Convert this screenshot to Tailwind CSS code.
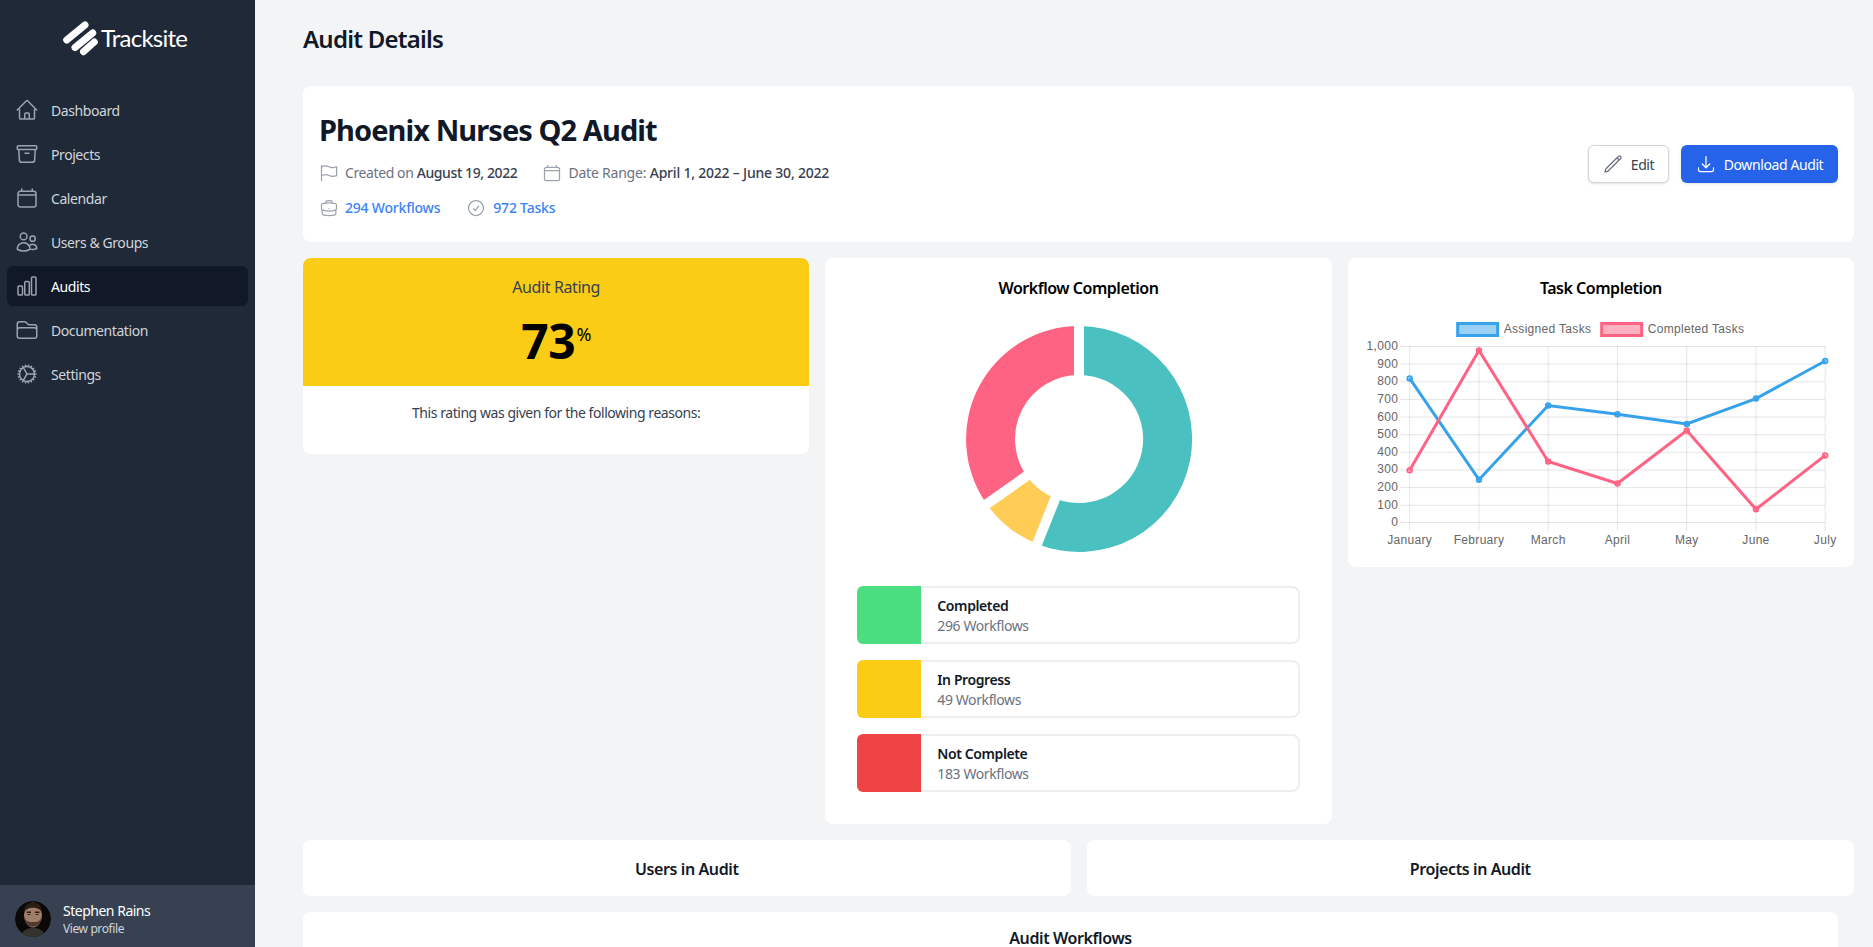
<!DOCTYPE html>
<html lang="en">
<head>
  <meta charset="UTF-8">
  <title>Audit Details</title>
  <script src="https://cdn.jsdelivr.net/npm/@tailwindcss/browser@4"></script>
</head>
<body class="h-screen overflow-hidden bg-[#f3f4f6] font-['Noto_Sans',sans-serif] tracking-[-0.025em]">
<div class="flex h-[947px]">

  <!-- sidebar -->
  <aside class="w-[255px] shrink-0 bg-[#1f2937] flex flex-col">
    <div class="h-[90px] flex items-start pl-[60px] pt-[18px]">
      <svg class="w-10 h-10" viewBox="60 18 40 40" fill="none" stroke="#fff" stroke-width="7" stroke-linecap="round">
        <path d="M66.7 40 L85 25"/>
        <path d="M75 47.5 L92.7 33"/>
        <path d="M83.5 51.7 L94.3 42"/>
      </svg>
      <span class="ml-[1px] mt-[5px] text-[24px] leading-[30px] text-white font-['Lato',sans-serif] tracking-[-0.032em]">Tracksite</span>
    </div>
    <nav class="flex flex-col gap-1 mx-[7px] flex-1 text-sm tracking-[-0.03em]">
      <a class="flex items-center h-10 px-2 rounded-md text-[#d1d5db]">
        <svg class="w-6 h-6 mr-3 text-[#9ca3af]" fill="none" viewBox="0 0 24 24" stroke="currentColor" stroke-width="1.5"><path stroke-linecap="round" stroke-linejoin="round" d="M2.25 12l8.954-8.955c.44-.439 1.152-.439 1.591 0L21.75 12M4.5 9.75v10.125c0 .621.504 1.125 1.125 1.125H9.75v-4.875c0-.621.504-1.125 1.125-1.125h2.25c.621 0 1.125.504 1.125 1.125V21h4.125c.621 0 1.125-.504 1.125-1.125V9.75M8.25 21h8.25"/></svg>
        <span class="mt-[2px]">Dashboard</span>
      </a>
      <a class="flex items-center h-10 px-2 rounded-md text-[#d1d5db]">
        <svg class="w-6 h-6 mr-3 text-[#9ca3af]" fill="none" viewBox="0 0 24 24" stroke="currentColor" stroke-width="1.5"><path stroke-linecap="round" stroke-linejoin="round" d="M20.25 7.5l-.625 10.632a2.25 2.25 0 01-2.247 2.118H6.622a2.25 2.25 0 01-2.247-2.118L3.75 7.5M10 11.25h4M3.375 7.5h17.25c.621 0 1.125-.504 1.125-1.125v-1.5c0-.621-.504-1.125-1.125-1.125H3.375c-.621 0-1.125.504-1.125 1.125v1.5c0 .621.504 1.125 1.125 1.125z"/></svg>
        <span class="mt-[2px]">Projects</span>
      </a>
      <a class="flex items-center h-10 px-2 rounded-md text-[#d1d5db]">
        <svg class="w-6 h-6 mr-3 text-[#9ca3af]" fill="none" viewBox="0 0 24 24" stroke="currentColor" stroke-width="1.5"><path stroke-linecap="round" stroke-linejoin="round" d="M6.75 3v2.25M17.25 3v2.25M3 18.75V7.5a2.25 2.25 0 012.25-2.25h13.5A2.25 2.25 0 0121 7.5v11.25m-18 0A2.25 2.25 0 005.25 21h13.5A2.25 2.25 0 0021 18.75m-18 0V9h18"/></svg>
        <span class="mt-[2px]">Calendar</span>
      </a>
      <a class="flex items-center h-10 px-2 rounded-md text-[#d1d5db]">
        <svg class="w-6 h-6 mr-3 text-[#9ca3af]" fill="none" viewBox="0 0 24 24" stroke="currentColor" stroke-width="1.5"><path stroke-linecap="round" stroke-linejoin="round" d="M15 19.128a9.38 9.38 0 002.625.372 9.337 9.337 0 004.121-.952 4.125 4.125 0 00-7.533-2.493M15 19.128v-.003c0-1.113-.285-2.16-.786-3.07M15 19.128v.106A12.318 12.318 0 018.624 21c-2.331 0-4.512-.645-6.374-1.766l-.001-.109a6.375 6.375 0 0111.964-3.07M12 6.375a3.375 3.375 0 11-6.75 0 3.375 3.375 0 016.75 0zm8.25 2.25a2.625 2.625 0 11-5.25 0 2.625 2.625 0 015.25 0z"/></svg>
        <span class="mt-[2px]">Users &amp; Groups</span>
      </a>
      <a class="flex items-center h-10 px-2 rounded-md text-white bg-[#111827]">
        <svg class="w-6 h-6 mr-3 text-[#9ca3af]" fill="none" viewBox="0 0 24 24" stroke="currentColor" stroke-width="1.5"><path stroke-linecap="round" stroke-linejoin="round" d="M3 13.125C3 12.504 3.504 12 4.125 12h2.25c.621 0 1.125.504 1.125 1.125v6.75C7.5 20.496 6.996 21 6.375 21h-2.25A1.125 1.125 0 013 19.875v-6.75zM9.75 8.625c0-.621.504-1.125 1.125-1.125h2.25c.621 0 1.125.504 1.125 1.125v11.25c0 .621-.504 1.125-1.125 1.125h-2.25a1.125 1.125 0 01-1.125-1.125V8.625zM16.5 4.125c0-.621.504-1.125 1.125-1.125h2.25C20.496 3 21 3.504 21 4.125v15.75c0 .621-.504 1.125-1.125 1.125h-2.25a1.125 1.125 0 01-1.125-1.125V4.125z"/></svg>
        <span class="mt-[2px]">Audits</span>
      </a>
      <a class="flex items-center h-10 px-2 rounded-md text-[#d1d5db]">
        <svg class="w-6 h-6 mr-3 text-[#9ca3af]" fill="none" viewBox="0 0 24 24" stroke="currentColor" stroke-width="1.5"><path stroke-linecap="round" stroke-linejoin="round" d="M2.25 12.75V12A2.25 2.25 0 014.5 9.75h15A2.25 2.25 0 0121.75 12v.75m-8.69-6.44l-2.12-2.12a1.5 1.5 0 00-1.061-.44H4.5A2.25 2.25 0 002.25 6v12a2.25 2.25 0 002.25 2.25h15A2.25 2.25 0 0021.75 18V9a2.25 2.25 0 00-2.25-2.25h-5.379a1.5 1.5 0 01-1.06-.44z"/></svg>
        <span class="mt-[2px]">Documentation</span>
      </a>
      <a class="flex items-center h-10 px-2 rounded-md text-[#d1d5db]">
        <svg class="w-6 h-6 mr-3 text-[#9ca3af]" fill="none" viewBox="0 0 24 24" stroke="currentColor" stroke-width="1.5"><path stroke-linecap="round" stroke-linejoin="round" d="M4.5 12a7.5 7.5 0 0015 0m-15 0a7.5 7.5 0 1115 0m-15 0H3m16.5 0H21m-1.5 0H12m-8.457 3.077l1.41-.513m14.095-5.13l1.41-.513M5.106 17.785l1.15-.964m11.49-9.642l1.149-.964M7.501 19.795l.75-1.3m7.5-12.99l.75-1.3m-6.063 16.658l.26-1.477m2.605-14.772l.26-1.477m0 17.726l-.26-1.477M10.698 4.614l-.26-1.477M16.5 19.794l-.75-1.299M7.5 4.205L12 12m6.894 5.785l-1.149-.964M6.256 7.178l-1.15-.964m15.352 8.864l-1.41-.513M4.954 9.435l-1.41-.514M12.002 12l-3.75 6.495"/></svg>
        <span class="mt-[2px]">Settings</span>
      </a>
    </nav>
    <div class="h-[62px] bg-[#374151] flex items-center pl-[15px] pt-[6px] gap-3">
      <svg class="w-9 h-9 rounded-full" viewBox="0 0 36 36">
        <circle cx="18" cy="18" r="18" fill="#0a0908"/>
        <path d="M6 36 C7 29 12 27 18 27 C24 27 29 29 30 36 Z" fill="#34322c"/>
        <ellipse cx="18" cy="14" rx="9" ry="12.5" fill="#a07e68"/>
        <path d="M9 12 C8 -2 28 -2 27 12 C25 5 11 5 9 12 Z" fill="#2c1d14"/>
        <path d="M9.5 16 C10 29 26 29 26.5 16 C25 21 22 21 18 21 C14 21 11 21 9.5 16 Z" fill="#4f3a2d"/>
        <rect x="11.5" y="10.5" width="4.5" height="1.5" fill="#2c1d14"/>
        <rect x="20" y="10.5" width="4.5" height="1.5" fill="#2c1d14"/>
        <rect x="12.5" y="13" width="3" height="1" fill="#3a2a20"/>
        <rect x="20.5" y="13" width="3" height="1" fill="#3a2a20"/>
      </svg>
      <div>
        <p class="text-sm leading-5 text-white tracking-[-0.035em]">Stephen Rains</p>
        <p class="text-xs leading-4 text-[#d1d5db]">View profile</p>
      </div>
    </div>
  </aside>

  <!-- main -->
  <main class="flex-1 pl-[48px] pr-[19px] min-w-0">
    <h1 class="h-[86px] pt-[24px] text-2xl leading-[30px] font-semibold text-[#111827] tracking-[-0.032em]">Audit Details</h1>

    <section class="h-[156px] bg-white rounded-lg p-4 flex items-center justify-between">
      <div class="pt-[2px]">
        <h2 class="text-[29px] leading-9 font-bold text-[#111827] tracking-[-0.032em]">Phoenix Nurses Q2 Audit</h2>
        <div class="mt-[15px] flex items-center gap-[25px] text-sm text-[#6b7280]">
          <span class="flex items-center">
            <svg class="w-5 h-5 mr-[6px] text-[#9ca3af]" fill="none" viewBox="0 0 24 24" stroke="currentColor" stroke-width="1.5"><path stroke-linecap="round" stroke-linejoin="round" d="M3 3v1.5M3 21v-6m0 0l2.77-.693a9 9 0 016.208.682l.108.054a9 9 0 006.086.71l3.114-.732a48.524 48.524 0 01-.005-10.499l-3.11.732a9 9 0 01-6.085-.711l-.108-.054a9 9 0 00-6.208-.682L3 4.5M3 15V4.5"/></svg>
            Created on&nbsp;<span class="font-medium text-[#374151]">August 19, 2022</span>
          </span>
          <span class="flex items-center tracking-[-0.015em]">
            <svg class="w-5 h-5 mr-[6px] text-[#9ca3af]" fill="none" viewBox="0 0 24 24" stroke="currentColor" stroke-width="1.5"><path stroke-linecap="round" stroke-linejoin="round" d="M6.75 3v2.25M17.25 3v2.25M3 18.75V7.5a2.25 2.25 0 012.25-2.25h13.5A2.25 2.25 0 0121 7.5v11.25m-18 0A2.25 2.25 0 005.25 21h13.5A2.25 2.25 0 0021 18.75m-18 0V9h18"/></svg>
            Date Range:&nbsp;<span class="font-medium text-[#374151]">April 1, 2022 – June 30, 2022</span>
          </span>
        </div>
        <div class="mt-[15px] flex items-center gap-[26px] text-sm font-medium text-[#3b82f6] tracking-[-0.015em]">
          <a class="flex items-center">
            <svg class="w-5 h-5 mr-[6px] text-[#9ca3af]" fill="none" viewBox="0 0 24 24" stroke="currentColor" stroke-width="1.5"><path stroke-linecap="round" stroke-linejoin="round" d="M20.25 14.15v4.25c0 1.094-.787 2.036-1.872 2.18-2.087.277-4.216.42-6.378.42s-4.291-.143-6.378-.42c-1.085-.144-1.872-1.086-1.872-2.18v-4.25m16.5 0a2.18 2.18 0 00.75-1.661V8.706c0-1.081-.768-2.015-1.837-2.175a48.114 48.114 0 00-3.413-.387m4.5 8.006c-.194.165-.42.295-.673.38A23.978 23.978 0 0112 15.75c-2.648 0-5.195-.429-7.577-1.22a2.016 2.016 0 01-.673-.38m0 0A2.18 2.18 0 013 12.489V8.706c0-1.081.768-2.015 1.837-2.175a48.111 48.111 0 013.413-.387m7.5 0V5.25A2.25 2.25 0 0013.5 3h-3a2.25 2.25 0 00-2.25 2.25v.894m7.5 0a48.667 48.667 0 00-7.5 0M12 12.75h.008v.008H12v-.008z"/></svg>
            294 Workflows
          </a>
          <a class="flex items-center">
            <svg class="w-5 h-5 mr-[7px] text-[#9ca3af]" fill="none" viewBox="0 0 24 24" stroke="currentColor" stroke-width="1.5"><path stroke-linecap="round" stroke-linejoin="round" d="M9 12.75L11.25 15 15 9.75M21 12a9 9 0 11-18 0 9 9 0 0118 0z"/></svg>
            972 Tasks
          </a>
        </div>
      </div>
      <div class="flex items-center gap-3">
        <button class="h-[38px] w-[81px] flex items-center justify-center rounded-md border border-[#d1d5db] bg-white text-sm text-[#374151] shadow-sm">
          <svg class="w-5 h-5 mr-2 text-[#6b7280]" fill="none" viewBox="0 0 24 24" stroke="currentColor" stroke-width="1.5"><path stroke-linecap="round" stroke-linejoin="round" d="M16.862 4.487l1.687-1.688a1.875 1.875 0 112.652 2.652L6.832 19.82a4.5 4.5 0 01-1.897 1.13l-2.685.8.8-2.685a4.5 4.5 0 011.13-1.897L16.863 4.487zm0 0L19.5 7.125"/></svg>
          <span class="mt-[2px]">Edit</span>
        </button>
        <button class="h-[38px] w-[157px] flex items-center justify-center rounded-md bg-[#2563eb] text-sm text-white shadow-sm">
          <svg class="w-5 h-5 mr-2" fill="none" viewBox="0 0 24 24" stroke="currentColor" stroke-width="1.5"><path stroke-linecap="round" stroke-linejoin="round" d="M3 16.5v2.25A2.25 2.25 0 005.25 21h13.5A2.25 2.25 0 0021 18.75V16.5M16.5 12L12 16.5m0 0L7.5 12m4.5 4.5V3"/></svg>
          <span class="mt-[2px]">Download Audit</span>
        </button>
      </div>
    </section>

    <div class="mt-4 grid grid-cols-3 gap-4 items-start">
      <!-- rating -->
      <section class="bg-white rounded-lg overflow-hidden h-[196px]">
        <div class="h-[128px] bg-[#facc15] pt-[17px] text-center">
          <p class="text-base leading-6 text-[#374151]">Audit Rating</p>
          <p class="mt-[16px] text-[48px] leading-[52px] font-bold text-black">73<span class="ml-[1px] align-[18px] text-[18px] leading-none font-normal">%</span></p>
        </div>
        <p class="pt-[17px] text-center text-sm leading-5 text-[#374151] tracking-[-0.032em]">This rating was given for the following reasons:</p>
      </section>

      <!-- workflow completion -->
      <section class="bg-white rounded-lg h-[566px] pt-[20px] px-8">
        <h3 class="text-center text-base leading-5 font-semibold text-black tracking-[-0.03em]">Workflow Completion</h3>
        <svg class="mx-auto mt-[28px] w-[226px] h-[226px] overflow-visible" viewBox="-114 -113 226 226">
          <path d="M0 -113 A113 113 0 1 1 -41.9 104.9 L-23.7 59.4 A64 64 0 1 0 0 -64 Z" fill="#4bc0c0"/>
          <path d="M-41.9 104.9 A113 113 0 0 1 -92.3 65.1 L-52.3 36.9 A64 64 0 0 0 -23.7 59.4 Z" fill="#ffcd56"/>
          <path d="M-92.3 65.1 A113 113 0 0 1 0 -113 L0 -64 A64 64 0 0 0 -52.3 36.9 Z" fill="#ff6384"/>
          <g stroke="#fff" stroke-width="10">
            <path d="M0 -120 L0 -58"/>
            <path d="M-44.5 111.4 L-21.5 53.9"/>
            <path d="M-98 69.2 L-47.4 33.4"/>
          </g>
        </svg>
        <div class="mt-[34px] flex flex-col gap-4">
          <div class="h-[58px] flex">
            <div class="w-16 rounded-l-md bg-[#4ade80]"></div>
            <div class="flex-1 pl-4 flex flex-col justify-center pt-[2px] rounded-r-lg border-2 border-l-0 border-[#eceef1]">
              <p class="text-sm leading-5 font-semibold text-[#111827]">Completed</p>
              <p class="text-sm leading-5 text-[#6b7280]">296 Workflows</p>
            </div>
          </div>
          <div class="h-[58px] flex">
            <div class="w-16 rounded-l-md bg-[#facc15]"></div>
            <div class="flex-1 pl-4 flex flex-col justify-center pt-[2px] rounded-r-lg border-2 border-l-0 border-[#eceef1]">
              <p class="text-sm leading-5 font-semibold text-[#111827]">In Progress</p>
              <p class="text-sm leading-5 text-[#6b7280]">49 Workflows</p>
            </div>
          </div>
          <div class="h-[58px] flex">
            <div class="w-16 rounded-l-md bg-[#ef4444]"></div>
            <div class="flex-1 pl-4 flex flex-col justify-center pt-[2px] rounded-r-lg border-2 border-l-0 border-[#eceef1]">
              <p class="text-sm leading-5 font-semibold text-[#111827]">Not Complete</p>
              <p class="text-sm leading-5 text-[#6b7280]">183 Workflows</p>
            </div>
          </div>
        </div>
      </section>

      <!-- task completion -->
      <section class="bg-white rounded-lg h-[309px] pt-[20px]">
        <h3 class="text-center text-base leading-5 font-semibold text-black tracking-[-0.03em]">Task Completion</h3>
        <svg class="mt-[10px] w-full h-[239px] font-['Liberation_Sans',sans-serif] tracking-[0.02em]" viewBox="1348 308 506 239">
          <g stroke="#000" stroke-opacity=".1">
            <path d="M1400 346.5H1825M1400 364.1H1825M1400 381.8H1825M1400 399.4H1825M1400 417.1H1825M1400 434.7H1825M1400 452.3H1825M1400 470H1825M1400 487.6H1825M1400 505.3H1825M1400 522.5H1825"/>
            <path d="M1409.5 346V531M1478.8 346V531M1548 346V531M1617.3 346V531M1686.6 346V531M1755.8 346V531M1825 346V531"/>
          </g>
          <rect x="1457.5" y="323.5" width="40" height="12" fill="#36a2eb" fill-opacity=".5" stroke="#36a2eb" stroke-width="3"/>
          <rect x="1601.5" y="323.5" width="40" height="12" fill="#ff6384" fill-opacity=".5" stroke="#ff6384" stroke-width="3"/>
          <g fill="#666" font-size="12">
            <text x="1503.5" y="333">Assigned Tasks</text>
            <text x="1647.5" y="333">Completed Tasks</text>
            <g text-anchor="end">
              <text x="1398" y="350">1,000</text>
              <text x="1398" y="367.5">900</text>
              <text x="1398" y="385.2">800</text>
              <text x="1398" y="402.8">700</text>
              <text x="1398" y="420.5">600</text>
              <text x="1398" y="438.1">500</text>
              <text x="1398" y="455.7">400</text>
              <text x="1398" y="473.4">300</text>
              <text x="1398" y="491">200</text>
              <text x="1398" y="508.7">100</text>
              <text x="1398" y="526">0</text>
            </g>
            <g text-anchor="middle">
              <text x="1409.5" y="544">January</text>
              <text x="1478.8" y="544">February</text>
              <text x="1548" y="544">March</text>
              <text x="1617.3" y="544">April</text>
              <text x="1686.6" y="544">May</text>
              <text x="1755.8" y="544">June</text>
              <text x="1825" y="544">July</text>
            </g>
          </g>
          <polyline fill="none" stroke="#36a2eb" stroke-width="3" points="1409.5,378.4 1478.8,479.7 1548,405.5 1617.3,414.3 1686.6,424 1755.8,398.6 1825,361"/>
          <polyline fill="none" stroke="#ff6384" stroke-width="3" points="1409.5,470.3 1478.8,350.4 1548,461.5 1617.3,483.5 1686.6,430.6 1755.8,509.3 1825,455.4"/>
          <g fill="#36a2eb" fill-opacity=".5" stroke="#36a2eb" stroke-width="1.5">
            <circle cx="1409.5" cy="378.4" r="2.5"/><circle cx="1478.8" cy="479.7" r="2.5"/><circle cx="1548" cy="405.5" r="2.5"/><circle cx="1617.3" cy="414.3" r="2.5"/><circle cx="1686.6" cy="424" r="2.5"/><circle cx="1755.8" cy="398.6" r="2.5"/><circle cx="1825" cy="361" r="2.5"/>
          </g>
          <g fill="#ff6384" fill-opacity=".5" stroke="#ff6384" stroke-width="1.5">
            <circle cx="1409.5" cy="470.3" r="2.5"/><circle cx="1478.8" cy="350.4" r="2.5"/><circle cx="1548" cy="461.5" r="2.5"/><circle cx="1617.3" cy="483.5" r="2.5"/><circle cx="1686.6" cy="430.6" r="2.5"/><circle cx="1755.8" cy="509.3" r="2.5"/><circle cx="1825" cy="455.4" r="2.5"/>
          </g>
        </svg>
      </section>
    </div>

    <div class="mt-4 grid grid-cols-2 gap-4">
      <section class="h-[56px] bg-white rounded-lg flex items-center justify-center pt-[2px] text-base font-semibold text-[#111827]">Users in Audit</section>
      <section class="h-[56px] bg-white rounded-lg flex items-center justify-center pt-[2px] text-base font-semibold text-[#111827]">Projects in Audit</section>
    </div>
    <section class="mt-4 mr-4 h-[60px] bg-white rounded-lg pt-[16px] text-center text-base leading-5 font-semibold text-[#111827]">Audit Workflows</section>
  </main>
</div>
</body>
</html>
